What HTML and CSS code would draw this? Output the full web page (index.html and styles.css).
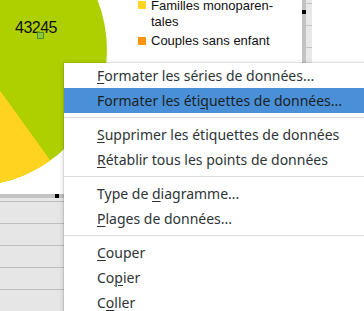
FILE: index.html
```html
<!DOCTYPE html>
<html>
  <head>
    <meta charset="utf-8">
    <title>Menu contextuel du diagramme</title>
    <link rel="stylesheet" href="styles.css">
  </head>
  <body>
    <div class="sheet">
      <div class="chart">
        <svg class="pie" width="302" height="194" viewBox="0 0 302 194">
          <circle cx="-29" cy="50" r="136" fill="#aecf00"/>
          <path d="M -29 50 L 50.3 160.5 A 136 136 0 0 1 -165 50 Z" fill="#ffd320"/>
        </svg>
        <div class="label">43245</div>
        <span class="label-handle"></span>
        <ul class="legend">
          <li><span class="swatch yellow"></span><span>Familles monoparen-<br>tales</span></li>
          <li><span class="swatch orange"></span><span>Couples sans enfant</span></li>
        </ul>
      </div>
      <div class="frame-v"><span class="handle right"></span></div>
      <div class="rows-v"></div>
      <div class="blank"></div>
      <div class="frame-h"><span class="handle bottom"></span></div>
      <div class="rows-h"></div>
    </div>

    <div class="menu">
      <div class="item"><u>F</u>ormater les séries de données...</div>
      <div class="item active">Formater les éti<u>q</u>uettes de données...</div>
      <div class="sep"></div>
      <div class="item"><u>S</u>upprimer les étiquettes de données</div>
      <div class="item"><u>R</u>établir tous les points de données</div>
      <div class="sep"></div>
      <div class="item">Type de <u>d</u>iagramme...</div>
      <div class="item"><u>P</u>lages de données...</div>
      <div class="sep"></div>
      <div class="item"><u>C</u>ouper</div>
      <div class="item">Co<u>p</u>ier</div>
      <div class="item">C<u>o</u>ller</div>
    </div>
  </body>
</html>
```

FILE: styles.css
```css
html, body {
  margin: 0;
  padding: 0;
}
body {
  width: 364px;
  height: 311px;
  overflow: hidden;
  position: relative;
  background: #fff;
  font-family: "Liberation Sans", sans-serif;
}
.sheet {
  display: grid;
  grid-template-columns: 302px 4px 6px 1fr;
  grid-template-rows: 194px 4px 1fr;
  height: 311px;
}
.chart {
  grid-column: 1;
  grid-row: 1;
  position: relative;
  overflow: hidden;
  background: #fff;
}
.pie {
  display: block;
}
.label {
  position: absolute;
  left: 15px;
  top: 19px;
  font-size: 16px;
  letter-spacing: -0.5px;
  color: #111;
}
.label-handle {
  position: absolute;
  left: 37px;
  top: 32px;
  width: 5px;
  height: 5px;
  background: #8cc63f;
  border: 1px solid #4f8f22;
}
.legend {
  position: absolute;
  left: 138px;
  top: -2px;
  margin: 0;
  padding: 0;
  list-style: none;
  font-size: 13px;
  line-height: 16px;
  color: #111;
}
.legend li {
  display: flex;
  gap: 5px;
  margin-bottom: 3px;
}
.swatch {
  flex: none;
  width: 8px;
  height: 8px;
  margin-top: 3px;
}
.swatch.yellow {
  background: #ffd320;
}
.swatch.orange {
  background: #ff950e;
  margin-top: 4px;
}
.frame-v {
  grid-column: 2;
  grid-row: 1;
  background: #c3c3c3;
  position: relative;
}
.rows-v {
  grid-column: 3;
  grid-row: 1;
  background: repeating-linear-gradient(to bottom, #e8e8e8 0 21px, #c4c4c4 21px 22px);
  background-position: 0 -18px;
}
.blank {
  grid-column: 4;
  grid-row: 1 / 4;
  background: #fff;
}
.frame-h {
  grid-column: 1 / 4;
  grid-row: 2;
  background: #c3c3c3;
  position: relative;
}
.rows-h {
  grid-column: 1 / 4;
  grid-row: 3;
  background: repeating-linear-gradient(to bottom, #e6e6e6 0 21px, #bdbdbd 21px 22px);
  background-position: 0 -18px;
}
.handle {
  position: absolute;
  width: 4px;
  height: 4px;
  background: #000;
}
.handle.right {
  left: 0;
  top: 10px;
}
.handle.bottom {
  left: 55px;
  top: 0;
}
.menu {
  position: absolute;
  left: 64px;
  top: 63px;
  width: 320px;
  background: #fff;
  box-shadow: 0 1px 5px rgba(0, 0, 0, 0.22), 0 0 0 1px rgba(0, 0, 0, 0.06);
  font-family: "Noto Sans", sans-serif;
  font-size: 14px;
  color: #2e3436;
}
.item {
  height: 25px;
  line-height: 25px;
  padding-left: 33px;
  white-space: nowrap;
}
.item.active {
  background: #4a90d9;
  color: #1c1f20;
}
.item u {
  text-decoration-thickness: 1px;
  text-underline-offset: 2px;
}
.sep {
  height: 1px;
  margin: 4px 0;
  background: #dcdcdc;
}
```
